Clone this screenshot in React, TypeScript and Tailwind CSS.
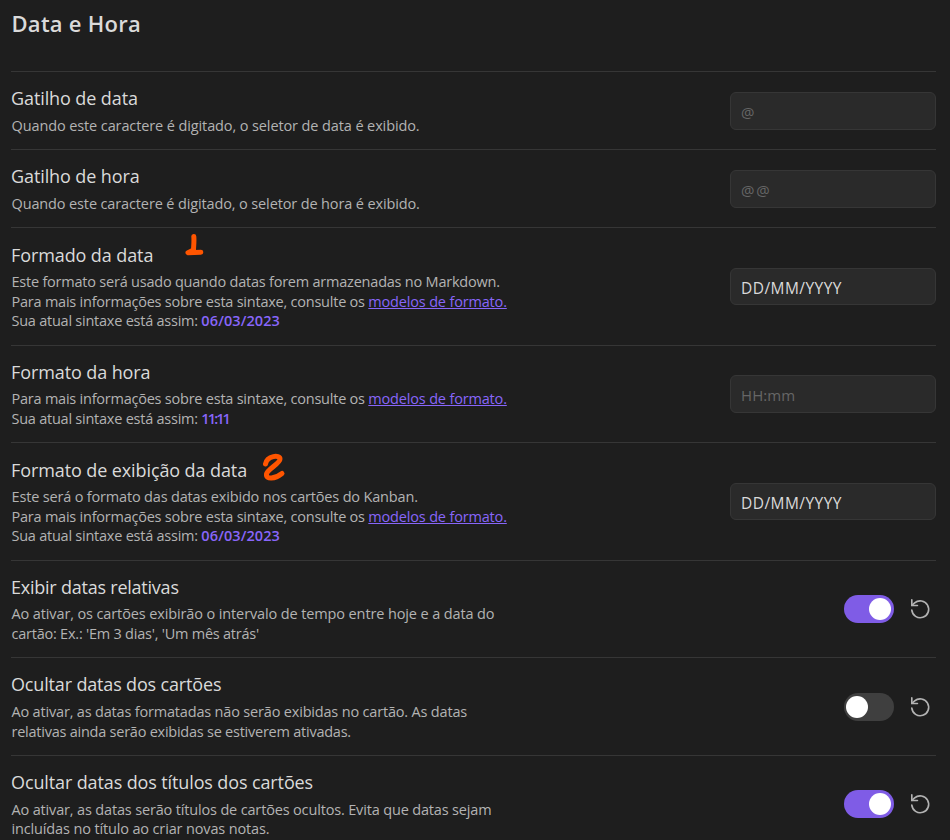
import type { ReactNode } from "react";

function Row({ title, tracking = "tracking-[-0.1px]", mark, children, control }: { title: ReactNode; tracking?: string; mark?: ReactNode; children: ReactNode; control: ReactNode }) {
  return (
    <div className="flex items-center justify-between border-t border-[#363636] pt-[14.22px] pb-[13.78px]">
      <div className="whitespace-nowrap">
        <div className={"relative mb-[5px] w-fit text-[18px] leading-[24.5px] text-[#dadada] " + tracking}>
          {title}
          {mark}
        </div>
        <div className="pl-[0.5px] text-[14.5px] leading-[19.6px] text-[#b3b3b3]">{children}</div>
      </div>
      {control}
    </div>
  );
}

function Field({ value, placeholder, text = "text-[15px] tracking-[-0.1px]" }: { value?: string; placeholder?: string; text?: string }) {
  return (
    <input
      defaultValue={value}
      placeholder={placeholder}
      className={"h-[37.4px] w-[206px] rounded-[6px] border border-[#363636] bg-[#2a2a2a] px-[10px] pt-[2px] text-[#dadada] outline-none placeholder:text-[#666666] " + text}
    />
  );
}

function Toggle({ on }: { on: boolean }) {
  return (
    <div className="flex items-center">
      <div className={on ? "flex h-7 w-[50px] items-center justify-end rounded-full bg-[#7f5ce6] px-[3px]" : "flex h-7 w-[50px] items-center rounded-full bg-[#3f3f3f] px-[2px]"}>
        <div className="size-[22px] rounded-full bg-white" />
      </div>
      <svg viewBox="0 0 24 24" className="mr-[5px] ml-[14.5px] size-[22.5px] text-[#b3b3b3]" fill="none" stroke="currentColor" strokeWidth="1.75" strokeLinecap="round" strokeLinejoin="round">
        <path d="M3 2v6h6" />
        <path d="M3 13a9 9 0 1 0 3-7.7L3 8" />
      </svg>
    </div>
  );
}

function Syntax({ value, tracking = "tracking-[0.1px]" }: { value: string; tracking?: string }) {
  return (
    <>
      <div className="tracking-[-0.23px]">
        Para mais informações sobre esta sintaxe, consulte os{" "}
        <a className="tracking-[-0.17px] text-[#8866fa] underline">modelos de formato.</a>
      </div>
      <div className="tracking-[-0.24px]">
        Sua atual sintaxe está assim: <b className={"font-semibold text-[#8866fa] " + tracking}>{value}</b>
      </div>
    </>
  );
}

const markOne = (
  <svg viewBox="0 0 20 24" className="absolute top-[-10px] left-[174px] h-6 w-5" fill="none" stroke="#ff5500" strokeWidth="5" strokeLinecap="round" strokeLinejoin="round">
    <path d="M8.800 3.500C9.300 9 8.500 14 8.500 17L3 19.700L15.800 19.200" />
  </svg>
);

const markTwo = (
  <svg viewBox="0 0 24 28" className="absolute top-[-5px] left-[251px] h-7 w-6" fill="none" stroke="#ff5500" strokeWidth="5" strokeLinecap="round" strokeLinejoin="round">
    <path d="M3.500 11C5 2.500 18 1.500 18 6C18 10.500 5.500 16 4.500 21C3.800 27 13 26 20 20.500" />
  </svg>
);

export default function App() {
  return (
    <div className="h-[840px] w-[950px] overflow-hidden bg-[#1e1e1e] pr-[14px] pl-[11px] font-['Open_Sans','Noto_Sans',sans-serif]">
      <h1 className="h-[71.2px] pt-[8px] pl-[0.5px] text-[22px] leading-[30px] font-semibold tracking-[0.25px] text-[#dadada]">Data e Hora</h1>
      <Row title="Gatilho de data" control={<Field placeholder="@" />}>
        <div className="tracking-[-0.11px]">Quando este caractere é digitado, o seletor de data é exibido.</div>
      </Row>
      <Row title="Gatilho de hora" control={<Field placeholder="@@" text="text-[15px] tracking-[1.8px]" />}>
        <div className="tracking-[-0.13px]">Quando este caractere é digitado, o seletor de hora é exibido.</div>
      </Row>
      <Row title="Formado da data" mark={markOne} control={<Field value="DD/MM/YYYY" text="text-[15.5px] tracking-[0.45px]" />}>
        <div className="tracking-[-0.22px]">Este formato será usado quando datas forem armazenadas no Markdown.</div>
        <Syntax value="06/03/2023" />
      </Row>
      <Row title="Formato da hora" control={<Field placeholder="HH:mm" text="text-[15px] tracking-[0.1px]" />}>
        <Syntax value="11:11" tracking="tracking-[-1.9px]" />
      </Row>
      <Row title="Formato de exibição da data" mark={markTwo} control={<Field value="DD/MM/YYYY" text="text-[15.5px] tracking-[0.45px]" />}>
        <div className="tracking-[-0.17px]">Este será o formato das datas exibido nos cartões do Kanban.</div>
        <Syntax value="06/03/2023" />
      </Row>
      <Row title="Exibir datas relativas" tracking="tracking-[-0.23px]" control={<Toggle on />}>
        <div className="tracking-[-0.12px]">Ao ativar, os cartões exibirão o intervalo de tempo entre hoje e a data do</div>
        <div className="tracking-[-0.23px]">cartão: Ex.: 'Em 3 dias', 'Um mês atrás'</div>
      </Row>
      <Row title="Ocultar datas dos cartões" tracking="tracking-[-0.16px]" control={<Toggle on={false} />}>
        <div className="tracking-[-0.18px]">Ao ativar, as datas formatadas não serão exibidas no cartão. As datas</div>
        <div className="tracking-[-0.24px]">relativas ainda serão exibidas se estiverem ativadas.</div>
      </Row>
      <Row title="Ocultar datas dos títulos dos cartões" tracking="tracking-[-0.12px]" control={<Toggle on />}>
        <div className="tracking-[-0.16px]">Ao ativar, as datas serão títulos de cartões ocultos. Evita que datas sejam</div>
        <div className="tracking-[-0.14px]">incluídas no título ao criar novas notas.</div>
      </Row>
    </div>
  );
}
